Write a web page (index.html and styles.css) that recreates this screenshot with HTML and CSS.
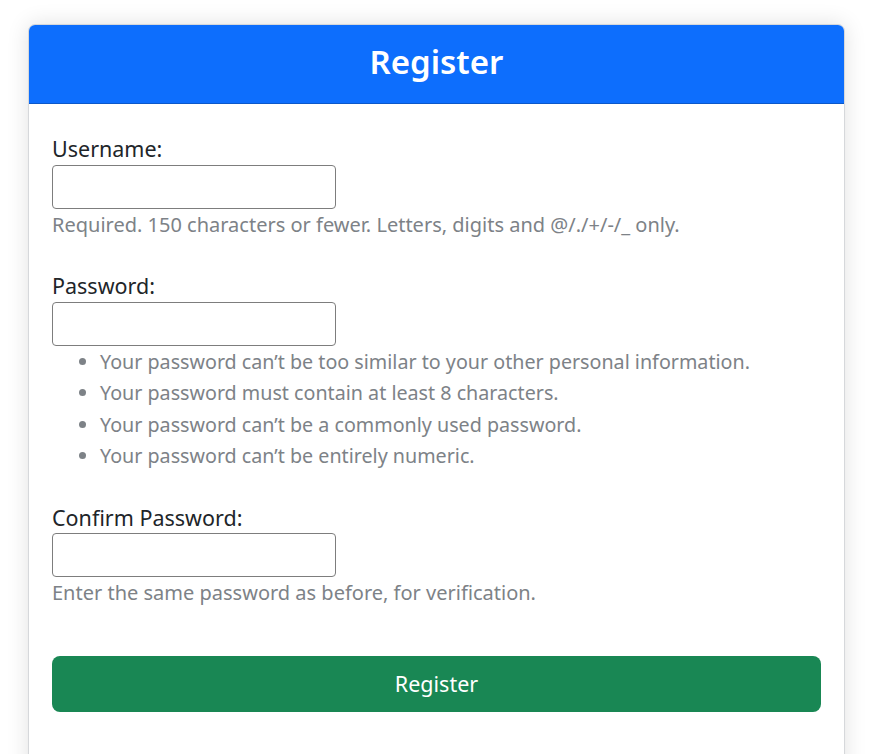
FILE: index.html
```html
<!DOCTYPE html>
<html lang="en">
<head>
<meta charset="utf-8">
<title>Register</title>
<link rel="stylesheet" href="styles.css">
</head>
<body>
<main class="container">
  <section class="card">
    <header class="card-header">
      <h1 class="card-title">Register</h1>
    </header>
    <form class="card-body">
      <div class="field">
        <label class="field-label" for="id_username">Username:</label>
        <input class="field-input" type="text" id="id_username" name="username">
        <span class="help">Required. 150 characters or fewer. Letters, digits and @/./+/-/_ only.</span>
      </div>
      <div class="field">
        <label class="field-label" for="id_password1">Password:</label>
        <input class="field-input" type="password" id="id_password1" name="password1">
        <ul class="help help-list">
          <li>Your password can’t be too similar to your other personal information.</li>
          <li>Your password must contain at least 8 characters.</li>
          <li>Your password can’t be a commonly used password.</li>
          <li>Your password can’t be entirely numeric.</li>
        </ul>
      </div>
      <div class="field">
        <label class="field-label" for="id_password2">Confirm Password:</label>
        <input class="field-input" type="password" id="id_password2" name="password2">
        <span class="help">Enter the same password as before, for verification.</span>
      </div>
      <button class="btn-submit" type="submit">Register</button>
    </form>
  </section>
</main>
</body>
</html>
```

FILE: styles.css
```css
* { box-sizing: border-box; }

html, body {
  margin: 0;
  padding: 0;
  background: #ffffff;
}

body {
  font-family: "Noto Sans", "Open Sans", "DejaVu Sans", sans-serif;
  font-size: 21px;
  line-height: 1.5;
  color: #212529;
}

.container {
  padding: 24px 28px 0;
}

.card {
  border: 1px solid #d6d8db;
  border-radius: 7px;
  background: #fff;
  box-shadow: 0 0 22px rgba(0, 0, 0, 0.12);
  overflow: hidden;
  min-height: 760px;
}

.card-header {
  background: #0d6efd;
  height: 79px;
  border-bottom: 1px solid #0b58c9;
  display: flex;
  align-items: center;
  justify-content: center;
}

.card-title {
  margin: 0;
  color: #fff;
  font-size: 33px;
  font-weight: 600;
  line-height: 1.2;
  padding-bottom: 4px;
}

.card-body {
  display: flex;
  flex-direction: column;
  padding: 29px 23px 24px;
}

.field {
  display: flex;
  flex-direction: column;
  align-items: flex-start;
  margin-bottom: 30px;
}

.field-label {
  display: block;
  font-size: 21.5px;
  line-height: 31.5px;
  color: #212529;
}

.field-input {
  width: 284px;
  height: 44px;
  border: 1px solid #7d7d7d;
  border-radius: 4px;
  background: #fff;
  font: inherit;
  padding: 4px 8px;
  margin: 0;
}

.help {
  display: block;
  color: #7d8287;
  font-size: 20px;
  line-height: 31.5px;
}

.help-list {
  margin: 0;
  padding-left: 48px;
  font-size: 19.7px;
}

.btn-submit {
  margin-top: 17px;
  height: 56px;
  width: 100%;
  border: none;
  border-radius: 8px;
  background: #198754;
  color: #fff;
  font-family: inherit;
  font-size: 21.5px;
  cursor: pointer;
}
```
